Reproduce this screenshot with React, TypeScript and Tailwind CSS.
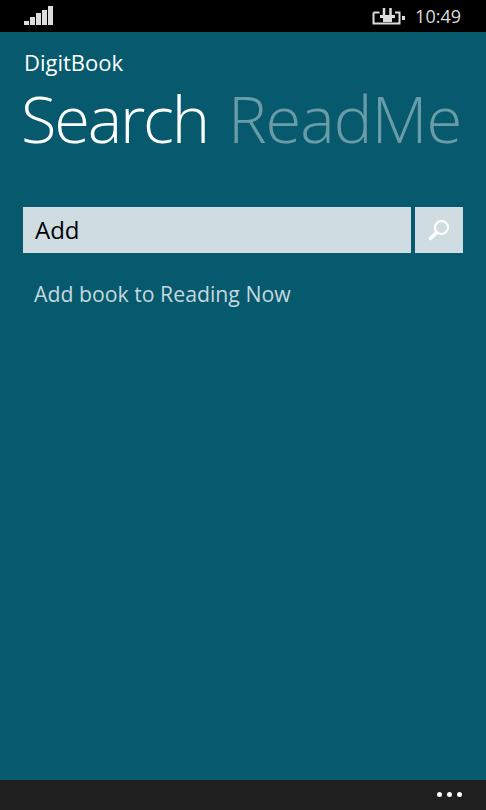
import React from 'react';

function SignalIcon() {
  return (
    <svg width="30" height="20" viewBox="0 0 30 20" className="block">
      <rect x="0" y="15" width="5" height="4" fill="#ddd" />
      <rect x="6" y="11" width="5" height="8" fill="#ddd" />
      <rect x="12" y="7" width="5" height="12" fill="#ddd" />
      <rect x="18" y="4" width="5" height="15" fill="#ddd" />
      <rect x="24" y="0" width="5" height="19" fill="#ddd" />
    </svg>
  );
}

function BatteryIcon() {
  return (
    <svg width="33" height="18" viewBox="0 0 33 18" className="block">
      <path d="M1.500 5.500h6M23 5.500h4.500v11h-26v-11" fill="none" stroke="#ddd" strokeWidth="2" />
      <path d="M8 8h15v3h-3v4h-9v-4h-3z" fill="#ddd" />
      <path d="M12 1v8M18.500 1v8" stroke="#ddd" strokeWidth="2.500" />
      <rect x="30" y="9" width="3" height="4" fill="#ddd" />
    </svg>
  );
}

function SearchGlyph() {
  return (
    <svg width="24" height="24" viewBox="0 0 24 24">
      <circle cx="14.500" cy="9.500" r="6.500" fill="none" stroke="#fff" strokeWidth="2.200" />
      <path d="M9.500 14.500 L3.500 20.500" stroke="#fff" strokeWidth="3.500" strokeLinecap="round" />
    </svg>
  );
}

export default function App() {
  return (
    <div className="w-[486px] h-[810px] flex flex-col bg-[#075a6e] overflow-hidden font-['Open_Sans','Liberation_Sans',sans-serif]">
      {/* Status bar */}
      <div className="h-8 bg-black flex items-center justify-between pl-6 pr-[25px] text-[#ddd]">
        <SignalIcon />
        <div className="flex items-center gap-[10px]">
          <BatteryIcon />
          <span className="text-[18px] leading-none">10:49</span>
        </div>
      </div>

      {/* Main content */}
      <div className="flex-1 pt-[16px]">
        <div className="pl-6 text-[22px] leading-[28px] font-medium text-white">DigitBook</div>

        <div className="flex items-baseline gap-[20px] pl-[21px] mt-[4px] whitespace-nowrap text-[65px] leading-[76px] font-light">
          <span className="text-white tracking-[-2.200px]">Search</span>
          <span className="text-white/40 tracking-[-1px]">ReadMe</span>
        </div>

        <div className="flex gap-[4px] pl-[23px] pr-[23px] mt-[51px]">
          <div className="flex-1 h-[46px] bg-[#cfdde3] flex items-center pl-[12px] text-[24px] text-black">Add</div>
          <div className="w-[48px] h-[46px] bg-[#cfdde3] flex items-center justify-center">
            <SearchGlyph />
          </div>
        </div>

        <div className="pl-[34px] mt-[24px] text-[21.250px] leading-[34px] text-[#c5d8de]">Add book to Reading Now</div>
      </div>

      {/* App bar */}
      <div className="h-[30px] bg-[#1f1f1f] flex items-center justify-end gap-[5px] pr-[24px] pb-[2px]">
        <span className="w-[5px] h-[5px] rounded-full bg-white" />
        <span className="w-[5px] h-[5px] rounded-full bg-white" />
        <span className="w-[5px] h-[5px] rounded-full bg-white" />
      </div>
    </div>
  );
}
